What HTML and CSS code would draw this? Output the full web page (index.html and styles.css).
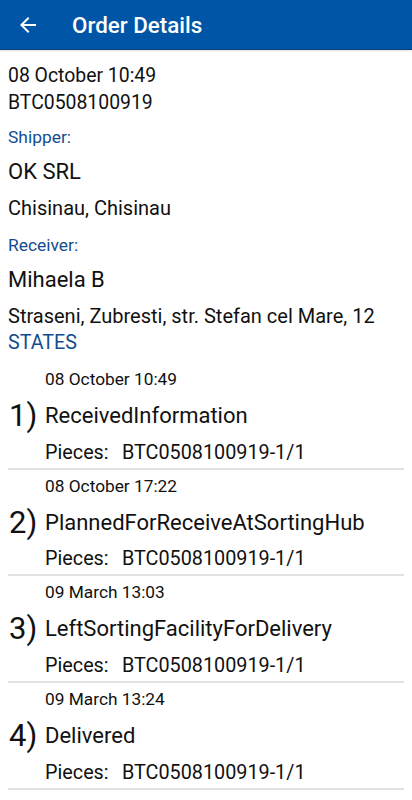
FILE: index.html
```html
<!DOCTYPE html>
<html>
<head>
<meta charset="utf-8">
<link rel="stylesheet" href="styles.css">
</head>
<body>
<header class="appbar">
  <svg class="back" viewBox="0 0 24 24" width="24" height="24"><path d="M20 11H7.83l5.59-5.59L12 4l-8 8 8 8 1.41-1.41L7.83 13H20v-2z" fill="#fff"/></svg>
  <h1 class="title">Order Details</h1>
</header>
<main class="content">
  <div class="meta">
    <div class="line">08 October 10:49</div>
    <div class="line">BTC0508100919</div>
  </div>
  <div class="label">Shipper:</div>
  <div class="name">OK SRL</div>
  <div class="addr">Chisinau, Chisinau</div>
  <div class="label">Receiver:</div>
  <div class="name">Mihaela B</div>
  <div class="addr">Straseni, Zubresti, str. Stefan cel Mare, 12</div>
  <div class="states">STATES</div>
  <ul class="list">
    <li class="item">
      <div class="date">08 October 10:49</div>
      <div class="num">1)</div>
      <div class="state">ReceivedInformation</div>
      <div class="pieces"><span class="pl">Pieces:</span><span>BTC0508100919-1/1</span></div>
    </li>
    <li class="item">
      <div class="date">08 October 17:22</div>
      <div class="num">2)</div>
      <div class="state">PlannedForReceiveAtSortingHub</div>
      <div class="pieces"><span class="pl">Pieces:</span><span>BTC0508100919-1/1</span></div>
    </li>
    <li class="item">
      <div class="date">09 March 13:03</div>
      <div class="num">3)</div>
      <div class="state">LeftSortingFacilityForDelivery</div>
      <div class="pieces"><span class="pl">Pieces:</span><span>BTC0508100919-1/1</span></div>
    </li>
    <li class="item">
      <div class="date">09 March 13:24</div>
      <div class="num">4)</div>
      <div class="state">Delivered</div>
      <div class="pieces"><span class="pl">Pieces:</span><span>BTC0508100919-1/1</span></div>
    </li>
  </ul>
</main>
</body>
</html>
```
FILE: styles.css
```css
* { box-sizing: border-box; }
html, body { margin: 0; padding: 0; background: #fff; }
body { font-family: Roboto, "Noto Sans", sans-serif; color: #111; width: 412px; }
.appbar {
  height: 50px;
  background: #0155a6;
  display: flex;
  align-items: center;
  padding-left: 16px;
  border-bottom: 1px solid #0b3f7a;
  box-shadow: 0 1px 2px rgba(0,0,0,0.12);
}
.back { display: block; }
.title {
  margin: 0 0 0 32px;
  color: #fff;
  font-size: 22.4px;
  font-weight: 500;
}
.content { padding: 11.6px 8px 0 8px; }
.line { font-size: 19.4px; line-height: 27px; }
.meta { margin-bottom: 2.4px; }
.label { font-size: 17.4px; line-height: 34px; padding-top: 2px; color: #134c8e; }
.name { font-size: 22px; line-height: 36px; }
.addr { font-size: 20px; line-height: 36px; white-space: nowrap; }
.states { font-size: 19.7px; line-height: 18px; color: #134c8e; }
.list { list-style: none; margin: 11px 0 0 0; padding: 0; }
.item {
  display: grid;
  grid-template-columns: 37px 1fr;
  grid-template-rows: 34px 36.7px 34px;
  border-bottom: 2px solid #e2e2e2;
}
.date { grid-column: 2; grid-row: 1; font-size: 17.3px; line-height: 32px; }
.num { grid-column: 1; grid-row: 2; font-size: 31px; line-height: 37px; padding-left: 1px; }
.state { grid-column: 2; grid-row: 2; font-size: 22px; line-height: 37px; white-space: nowrap; }
.pieces { grid-column: 2; grid-row: 3; font-size: 19.8px; line-height: 37px; display: flex; }
.pl { width: 77px; }
```
